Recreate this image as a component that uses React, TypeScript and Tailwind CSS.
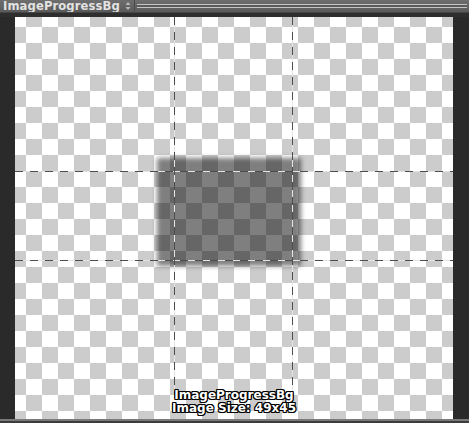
import React from "react";

const outline =
  "[text-shadow:1px_0_0_#000,-1px_0_0_#000,0_1px_0_#000,0_-1px_0_#000,1px_1px_0_#000,-1px_-1px_0_#000,1px_-1px_0_#000,-1px_1px_0_#000]";

export default function App() {
  return (
    <div className="w-[469px] h-[423px] flex flex-col bg-[#2b2b2b] overflow-hidden" style={{ fontFamily: '"DejaVu Sans", sans-serif' }}>
      {/* header */}
      <div className="h-[12px] flex items-center bg-[linear-gradient(#6e6e6e,#5a5a5a)]">
        <span className="pl-[3px] text-[11.6px] leading-[12px] font-bold text-[#e2e2e2] tracking-[0.1px]">ImageProgressBg</span>
        <svg width="6" height="10" viewBox="0 0 6 10" className="ml-[5px]">
          <path d="M3 1 L5.5 4 L0.5 4 Z" fill="#b8b8b8" />
          <path d="M3 9 L5.5 6 L0.5 6 Z" fill="#b8b8b8" />
        </svg>
        <div className="ml-[3px] w-[1px] h-[12px] bg-[#4a4a4a]" />
        <div className="ml-[2px] w-[330px] flex flex-col">
          <div className="h-[1px] bg-[#c4c4c4]" />
          <div className="h-[2px] bg-[#5a5a5a]" />
          <div className="h-[1px] bg-[#c4c4c4]" />
        </div>
      </div>
      <div className="h-[1px] bg-[#454545]" />
      <div className="h-[4px] bg-[#2e2e2e]" />
      {/* main */}
      <div className="h-[402px] flex">
        <div className="w-[15px] bg-[#2a2a2a]" />
        <div className="relative flex-1 overflow-hidden bg-[conic-gradient(#cccccc_25%,#ffffff_0_50%,#cccccc_0_75%,#ffffff_0)] bg-size-[32px_32px] bg-position-[-5px_-6px]">
          {/* image preview (dark blurred) */}
          <div className="absolute left-[142px] top-[141px] w-[144px] h-[108px] bg-black/50 blur-[2.5px]" />
          {/* guide lines */}
          <div className="absolute left-0 right-0 top-[154px] h-[1px] bg-[repeating-linear-gradient(90deg,#4e4e4e_0_8px,#e4e4e4_8px_15px)]" />
          <div className="absolute left-0 right-0 top-[243px] h-[1px] bg-[repeating-linear-gradient(90deg,#4e4e4e_0_8px,#e4e4e4_8px_15px)]" />
          <div className="absolute top-0 h-[376px] left-[159px] w-[1px] bg-[repeating-linear-gradient(180deg,#4e4e4e_0_8px,#e4e4e4_8px_15px)]" />
          <div className="absolute top-0 h-[376px] left-[277px] w-[1px] bg-[repeating-linear-gradient(180deg,#4e4e4e_0_8px,#e4e4e4_8px_15px)]" />
          {/* caption */}
          <div className={`absolute left-0 right-0 bottom-[5px] flex flex-col items-center text-white font-bold text-[12px] leading-[12.5px] ${outline}`}>
            <span>ImageProgressBg</span>
            <span>Image Size: 49x45</span>
          </div>
        </div>
        <div className="w-[16px] bg-[#2a2a2a]" />
      </div>
      <div className="h-[2px] bg-[#7a7a7a]" />
      <div className="h-[2px] bg-[#3c3c3c]" />
    </div>
  );
}
